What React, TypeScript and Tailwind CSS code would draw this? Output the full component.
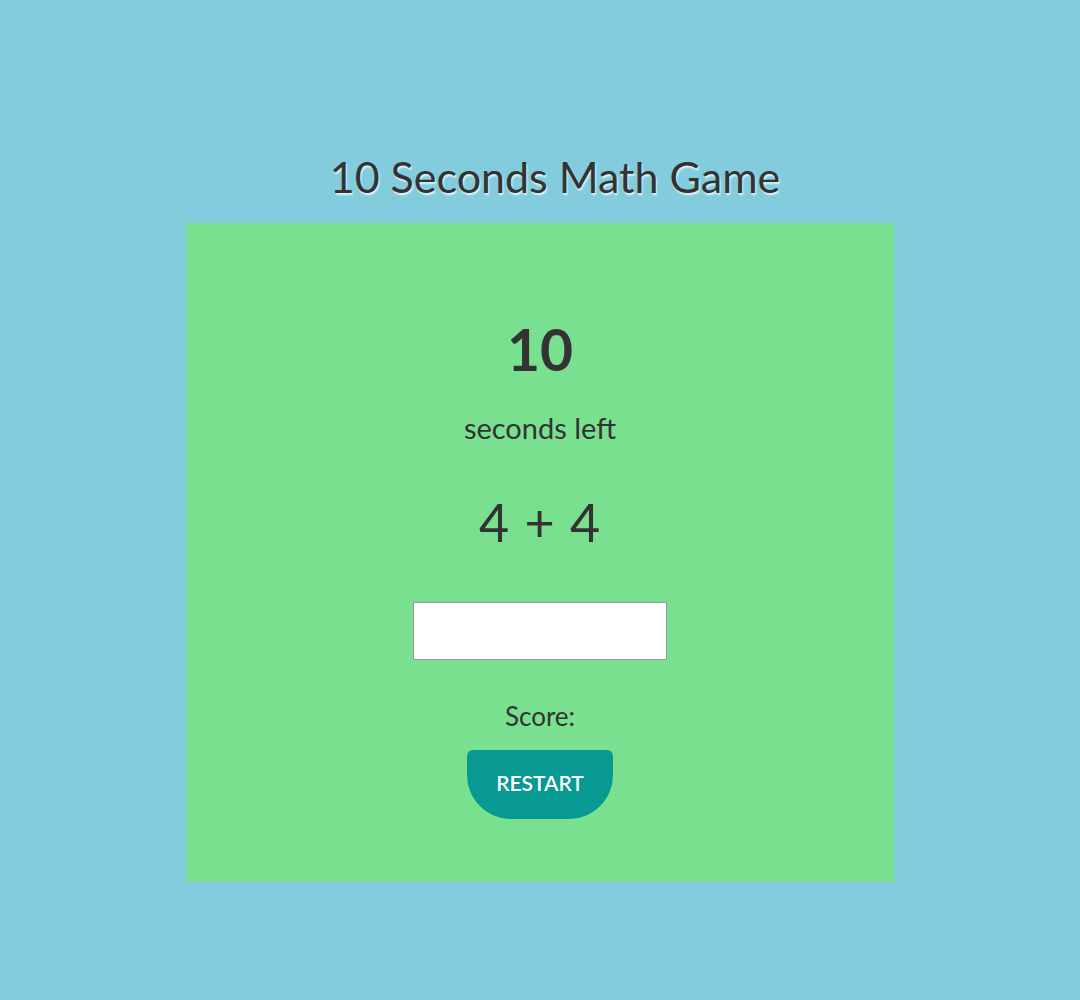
import React, { useState } from 'react';

export default function App() {
  const [answer, setAnswer] = useState('');

  return (
    <div className="min-h-[1000px] w-full bg-[#82ccdd] flex flex-col items-center pt-[149px] font-['Lato',sans-serif] text-[#333]">
      {/* Title */}
      <h1 className="text-[43px] leading-[56px] ml-[30px] mb-[18px] [text-shadow:1px_2px_2px_rgba(255,255,255,0.8)]">
        10 Seconds Math Game
      </h1>

      {/* Game card */}
      <div className="w-[708px] h-[659px] bg-[#78e08f] flex flex-col items-center pt-[92px]">
        <div className="text-[57px] font-bold leading-[72px] mt-[-2px]">10</div>
        <div className="text-[29px] leading-[36px] mt-[25px]">seconds left</div>
        <div className="text-[52px] leading-[64px] mt-[44px] tracking-[1px]">4 + 4</div>
        <input
          type="text"
          value={answer}
          onChange={(e) => setAnswer(e.target.value)}
          className="mt-[48px] w-[254px] h-[58px] bg-white border border-[#999] outline-none px-3 text-[24px]"
        />
        <div className="text-[26px] leading-[32px] mt-[40px]">Score:</div>
        <button className="mt-[18px] w-[146px] h-[69px] bg-[#079992] text-white text-[21px] font-semibold rounded-t-[6px] rounded-b-[44px] pb-[4px]">
          RESTART
        </button>
      </div>
    </div>
  );
}
